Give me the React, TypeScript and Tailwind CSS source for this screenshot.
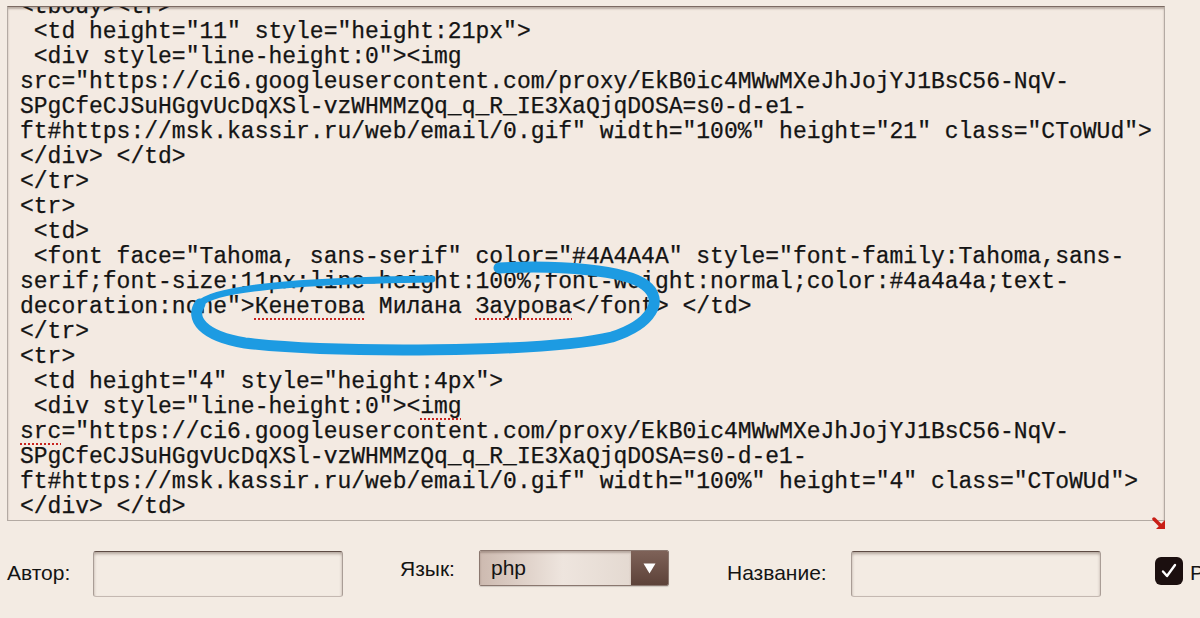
const lines: { text: string; marks?: string[] }[] = [
  { text: '<tbody><tr>' },
  { text: ' <td height="11" style="height:21px">' },
  { text: ' <div style="line-height:0"><img' },
  { text: 'src="https://ci6.googleusercontent.com/proxy/EkB0ic4MWwMXeJhJojYJ1BsC56-NqV-' },
  { text: 'SPgCfeCJSuHGgvUcDqXSl-vzWHMMzQq_q_R_IE3XaQjqDOSA=s0-d-e1-' },
  { text: 'ft#https://msk.kassir.ru/web/email/0.gif" width="100%" height="21" class="CToWUd">' },
  { text: '</div> </td>' },
  { text: '</tr>' },
  { text: '<tr>' },
  { text: ' <td>' },
  { text: ' <font face="Tahoma, sans-serif" color="#4A4A4A" style="font-family:Tahoma,sans-' },
  { text: 'serif;font-size:11px;line-height:100%;font-weight:normal;color:#4a4a4a;text-' },
  { text: 'decoration:none">Кенетова Милана Заурова</font> </td>', marks: ['Кенетова', 'Заурова'] },
  { text: '</tr>' },
  { text: '<tr>' },
  { text: ' <td height="4" style="height:4px">' },
  { text: ' <div style="line-height:0"><img', marks: ['img'] },
  { text: 'src="https://ci6.googleusercontent.com/proxy/EkB0ic4MWwMXeJhJojYJ1BsC56-NqV-', marks: ['src'] },
  { text: 'SPgCfeCJSuHGgvUcDqXSl-vzWHMMzQq_q_R_IE3XaQjqDOSA=s0-d-e1-' },
  { text: 'ft#https://msk.kassir.ru/web/email/0.gif" width="100%" height="4" class="CToWUd">' },
  { text: '</div> </td>' },
  { text: '</tr>' },
];

function CodeLine({ text, marks }: { text: string; marks?: string[] }) {
  if (!marks || marks.length === 0) return <div>{text}</div>;
  const parts: React.ReactNode[] = [];
  let rest = text;
  let key = 0;
  for (const m of marks) {
    const i = rest.indexOf(m);
    if (i < 0) continue;
    parts.push(rest.slice(0, i));
    parts.push(
      <span key={key++} className="underline decoration-dotted decoration-[#c8231e] decoration-2 underline-offset-[5px]">
        {m}
      </span>
    );
    rest = rest.slice(i + m.length);
  }
  parts.push(rest);
  return <div>{parts}</div>;
}

function Field() {
  return (
    <div className="w-[250px] h-[46px] rounded-[3px] border border-[#a99d96] border-t-[#5d4b44] border-b-[#c4b8b1] bg-[#f3ebe3] shadow-[inset_0_2px_3px_rgba(70,45,35,0.35)]" />
  );
}

export default function App() {
  return (
    <div className="relative w-[1200px] h-[618px] overflow-hidden bg-[#f3ebe3] text-[#141414]">
      <div className="relative ml-[7px] mt-[6px] w-[1158px] h-[515px] border border-[#b3aaa3] border-t-[#7b6a62] shadow-[inset_0_2px_2px_rgba(80,60,50,0.35)] bg-[#f3eae2]">
        <div className="h-full overflow-hidden">
          <div className="-mt-[12px] pl-[12px] whitespace-pre font-['Liberation_Mono','Courier_New',monospace] text-[23px] leading-[25px] [-webkit-text-stroke:0.25px_#141414]">
            {lines.map((l, i) => (
              <CodeLine key={i} text={l.text} marks={l.marks} />
            ))}
          </div>
        </div>
        <svg className="absolute -right-[2px] -bottom-[10px]" width="14" height="14" viewBox="0 0 14 14">
          <path d="M2 3 L8 9" stroke="#c81e16" strokeWidth="3.5" strokeLinecap="round" />
          <path d="M4 13 L13 13 L13 4 Z" fill="#c81e16" />
        </svg>
      </div>

      <div className="flex items-start font-['Liberation_Sans',Arial,sans-serif] text-[21px] leading-[24px] whitespace-nowrap">
        <div className="shrink-0 ml-[7px] w-[86px] mt-[40px]">Автор:</div>
        <div className="shrink-0 mt-[30px]">
          <Field />
        </div>
        <div className="shrink-0 ml-[57px] w-[79px] mt-[36px]">Язык:</div>
        <div className="shrink-0 mt-[29px] flex w-[190px] h-[36px] rounded-[2px] border border-[#8a776f] overflow-hidden shadow-[0_1px_1px_rgba(0,0,0,0.15)]">
          <div className="flex-1 flex items-center pl-[11px] bg-[linear-gradient(to_right,#cdbab0,#eee5de_55%,#e4d9d1)] shadow-[inset_0_2px_2px_rgba(80,55,45,0.3)]">
            php
          </div>
          <div className="w-[37px] flex items-center justify-center bg-[linear-gradient(to_bottom,#7e6258,#5d4239)]">
            <svg width="13" height="11" viewBox="0 0 13 11">
              <path d="M0.5 0.5 H12.5 L6.5 10.5 Z" fill="#ffffff" />
            </svg>
          </div>
        </div>
        <div className="shrink-0 ml-[58px] w-[124px] mt-[40px]">Название:</div>
        <div className="shrink-0 mt-[30px]">
          <Field />
        </div>
        <div className="shrink-0 ml-[54px] mt-[36px] w-[28px] h-[28px] rounded-[6px] bg-[#1b0f0f] flex items-center justify-center">
          <svg width="18" height="18" viewBox="0 0 18 18">
            <path d="M3 9.5 L7 14 L15 3" fill="none" stroke="#ffffff" strokeWidth="2.4" strokeLinecap="round" strokeLinejoin="round" />
          </svg>
        </div>
        <div className="shrink-0 ml-[7px] mt-[40px]">P</div>
      </div>

      <svg className="absolute left-0 top-0 pointer-events-none" width="1200" height="618" viewBox="0 0 1200 618">
        <path
          d="M499 268 C560 265 625 270 645 285 C665 300 652 324 612 337 C545 353 330 353 245 343 C202 336 190 318 200 304"
          fill="none"
          stroke="#1d9be2"
          strokeWidth="11"
          strokeLinecap="round"
          strokeLinejoin="round"
        />
        <path
          d="M200 304 C212 289 290 281 432 279"
          fill="none"
          stroke="#1d9be2"
          strokeWidth="7"
          strokeLinecap="round"
        />
      </svg>
    </div>
  );
}
